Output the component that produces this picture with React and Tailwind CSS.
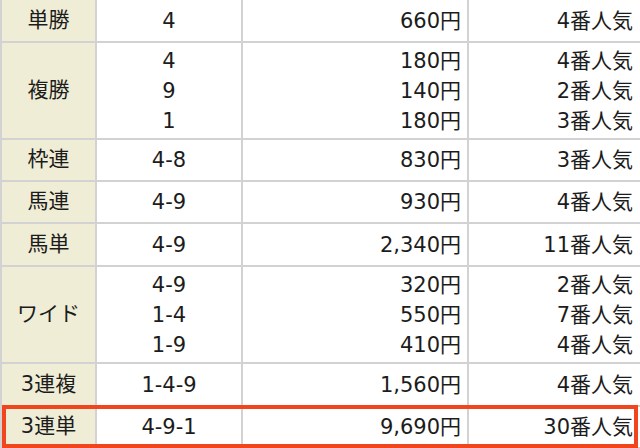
const rows = [
  { name: '単勝', h: 'h-[43px]', items: [['4', '660円', '4番人気']] },
  {
    name: '複勝',
    h: 'h-[97px]',
    items: [
      ['4', '180円', '4番人気'],
      ['9', '140円', '2番人気'],
      ['1', '180円', '3番人気'],
    ],
  },
  { name: '枠連', h: 'h-[42px]', items: [['4-8', '830円', '3番人気']] },
  { name: '馬連', h: 'h-[42px]', items: [['4-9', '930円', '4番人気']] },
  { name: '馬単', h: 'h-[43px]', items: [['4-9', '2,340円', '11番人気']] },
  {
    name: 'ワイド',
    h: 'h-[97px]',
    items: [
      ['4-9', '320円', '2番人気'],
      ['1-4', '550円', '7番人気'],
      ['1-9', '410円', '4番人気'],
    ],
  },
  { name: '3連複', h: 'h-[43px]', items: [['1-4-9', '1,560円', '4番人気']] },
  { name: '3連単', h: 'h-[42px]', items: [['4-9-1', '9,690円', '30番人気']] },
];

function Lines({ list, align }) {
  return (
    <div className={align}>
      {list.map((t, i) => (
        <div key={i} className="leading-[30px]">
          {t}
        </div>
      ))}
    </div>
  );
}

export default function App() {
  const cell = 'border-2 border-[#d2d2d2] align-middle p-0';
  return (
    <div
      className="relative w-[640px] h-[448px] overflow-hidden bg-white text-[#1c1c1c] text-[21px]"
      style={{ fontFamily: '"DejaVu Sans", "Noto Sans CJK JP", sans-serif' }}
    >
      <table className="w-[640px] table-fixed border-collapse mt-[-2px]">
        <colgroup>
          <col className="w-[95px]" />
          <col className="w-[146px]" />
          <col className="w-[226px]" />
          <col className="w-[173px]" />
        </colgroup>
        <tbody>
          {rows.map((r) => (
            <tr key={r.name} className={r.h}>
              <td className={`${cell} bg-[#efedd6] text-center`}>{r.name}</td>
              <td className={`${cell} text-center`}>
                <Lines list={r.items.map((x) => x[0])} align="text-center" />
              </td>
              <td className={`${cell} pr-[6px]`}>
                <Lines list={r.items.map((x) => x[1])} align="text-right" />
              </td>
              <td className={`${cell} pr-[7px]`}>
                <Lines list={r.items.map((x) => x[2])} align="text-right" />
              </td>
            </tr>
          ))}
        </tbody>
      </table>
      {/* 3連単のハイライト枠 */}
      <div className="absolute left-[2px] top-[405px] w-[636px] h-[43px] border-4 border-[#f1461d]" />
    </div>
  );
}
